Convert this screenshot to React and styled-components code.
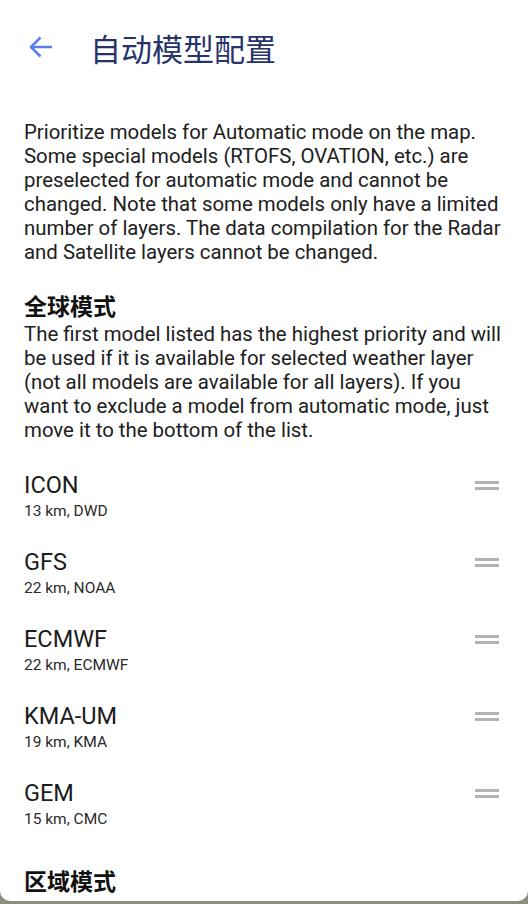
import styled, { createGlobalStyle } from "styled-components"

const GlobalStyle = createGlobalStyle`
    html, body {
        margin: 0;
        padding: 0;
        height: 100%;
        overflow: hidden;
        background: #8a8f7e;
    }
    body {
        font-family: Roboto, "Noto Sans CJK SC", sans-serif;
    }
`

const models = [
    { name: "ICON", info: "13 km, DWD" },
    { name: "GFS", info: "22 km, NOAA" },
    { name: "ECMWF", info: "22 km, ECMWF" },
    { name: "KMA-UM", info: "19 km, KMA" },
    { name: "GEM", info: "15 km, CMC" },
]

function BackIcon() {
    return (
        <svg width="26" height="26" viewBox="0 0 26 26" fill="none">
            <path d="M24 13H3M12.5 3.5L3 13l9.5 9.5" stroke="#5b7fe6" strokeWidth="2.6" strokeLinejoin="round" />
        </svg>
    )
}

export default function App() {
    return (
        <>
            <GlobalStyle />
            <StyledSheet>
                <StyledAppBar>
                    <StyledBack><BackIcon /></StyledBack>
                    <StyledTitle>自动模型配置</StyledTitle>
                </StyledAppBar>
                <StyledContent>
                    <StyledText>
                        Prioritize models for Automatic mode on the map. Some special models (RTOFS, OVATION, etc.) are preselected for automatic mode and cannot be changed. Note that some models only have a limited number of layers. The data compilation for the Radar and Satellite layers cannot be changed.
                    </StyledText>
                    <StyledHeading $space={24}>全球模式</StyledHeading>
                    <StyledText>
                        The first model listed has the highest priority and will be used if it is available for selected weather layer (not all models are available for all layers). If you want to exclude a model from automatic mode, just move it to the bottom of the list.
                    </StyledText>
                    <StyledList>
                        {models.map(model => (
                            <StyledRow key={model.name}>
                                <div>
                                    <StyledName>{model.name}</StyledName>
                                    <StyledInfo>{model.info}</StyledInfo>
                                </div>
                                <StyledHandle />
                            </StyledRow>
                        ))}
                    </StyledList>
                    <StyledHeading $space={7}>区域模式</StyledHeading>
                </StyledContent>
            </StyledSheet>
        </>
    )
}

const StyledSheet = styled.div`
    background: #ffffff;
    height: 901px;
    border-radius: 0 0 10px 10px;
    overflow: hidden;
`

const StyledAppBar = styled.div`
    height: 94px;
    display: flex;
    align-items: center;
    padding-left: 28px;
`

const StyledBack = styled.div`
    width: 26px;
    height: 26px;
    margin-right: 36px;
`

const StyledTitle = styled.div`
    font-size: 31px;
    color: #27346a;
    font-family: "Noto Sans CJK SC", sans-serif;
`

const StyledContent = styled.div`
    padding: 26px 24px 0;
`

const StyledText = styled.p`
    margin: 0;
    font-size: 20.4px;
    line-height: 24px;
    color: #202020;
`

const StyledHeading = styled.h2`
    margin: ${props => props.$space}px 0 0;
    font-size: 23px;
    line-height: 34px;
    font-weight: 700;
    color: #111;
    font-family: "Noto Sans CJK SC", sans-serif;
`

const StyledList = styled.div`
    display: flex;
    flex-direction: column;
    margin-top: 29px;
`

const StyledRow = styled.div`
    display: flex;
    justify-content: space-between;
    align-items: flex-start;
    height: 77px;
    padding-right: 5px;
`

const StyledName = styled.div`
    font-size: 23.5px;
    line-height: 28px;
    color: #1c1c1c;
`

const StyledInfo = styled.div`
    font-size: 15.5px;
    line-height: 24px;
    color: #2a2a2a;
`

const StyledHandle = styled.div`
    width: 24px;
    height: 9px;
    margin-top: 10px;
    border-top: 3px solid #b3b3b3;
    border-bottom: 3px solid #b3b3b3;
    box-sizing: border-box;
`
